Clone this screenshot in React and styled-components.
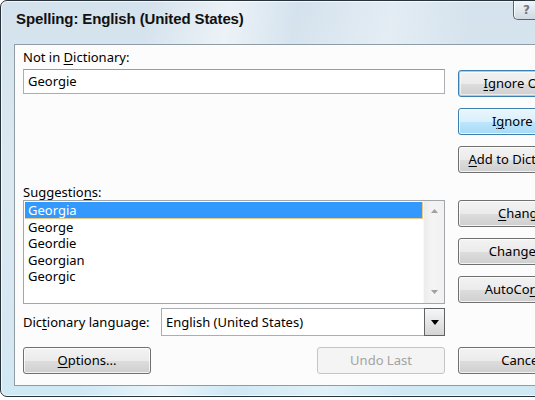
import React from 'react';
import styled, { createGlobalStyle, css } from 'styled-components';

const Global = createGlobalStyle`
  html, body { margin: 0; padding: 0; background: #ffffff; overflow: hidden; }
  body { width: 535px; height: 400px; font-family: "Noto Sans", "Segoe UI", sans-serif; font-size: 13px; color: #000; }
  * { box-sizing: border-box; }
`;

const Window = styled.div`
  width: 610px;
  height: 397px;
  border: 1px solid #27323a;
  border-radius: 7px 7px 7px 7px;
  box-shadow: inset 0 0 0 1px rgba(255, 255, 255, 0.75);
  background:
    linear-gradient(100deg, rgba(255,255,255,0) 0%, rgba(255,255,255,0) 22%, rgba(255,255,255,0.55) 34%, rgba(255,255,255,0) 44%, rgba(255,255,255,0.35) 58%, rgba(255,255,255,0) 70%),
    linear-gradient(180deg, #d4e2ed 0%, #dbe8f1 40%, #d7e7f1 85%, #cfe9f5 100%);
  display: flex;
  flex-direction: column;
  overflow: hidden;
`;

const TitleBar = styled.div`
  height: 43px;
  display: flex;
  align-items: flex-start;
  flex: none;
`;

const Title = styled.div`
  flex: 1;
  padding: 9px 0 0 15px;
  font-family: "Liberation Sans", Arial, sans-serif;
  font-weight: bold;
  font-size: 15px;
  letter-spacing: -0.12px;
  line-height: 18px;
  color: #111;
`;

const Caption = styled.div`
  display: flex;
  margin-right: 27px;
  margin-top: -1px;
`;

const HelpButton = styled.div`
  width: 26px;
  height: 20px;
  border: 1px solid #5a656e;
  border-top: none;
  border-right: none;
  border-radius: 0 0 0 5px;
  background: linear-gradient(180deg, #f3f6f9 0%, #e2e9ef 50%, #cfd9e1 100%);
  box-shadow: inset 1px 0 0 rgba(255,255,255,0.8);
  color: #6c7780;
  font-family: "DejaVu Sans", sans-serif;
  font-weight: bold;
  font-size: 12px;
  line-height: 20px;
  text-align: center;
`;

const CloseButton = styled.div`
  width: 43px;
  height: 20px;
  border: 1px solid #5a2b2b;
  border-top: none;
  border-radius: 0 0 5px 0;
  background: linear-gradient(180deg, #e7a79a 0%, #d66f5d 50%, #c0412c 100%);
  color: #fff;
  font-family: "DejaVu Sans", sans-serif;
  font-weight: bold;
  font-size: 12px;
  line-height: 20px;
  text-align: center;
`;

const Client = styled.div`
  margin: 0 13px;
  height: 342px;
  flex: none;
  border: 1px solid #8f9ba5;
  background: #fcfcfc;
  display: grid;
  grid-template-columns: 422px 127px;
  grid-template-rows: auto auto;
  column-gap: 13px;
  padding: 4px 9px 11px 8px;
`;

const LeftColumn = styled.div`
  display: flex;
  flex-direction: column;
`;

const RightColumn = styled.div`
  display: flex;
  flex-direction: column;
  padding-top: 21px;
`;

const Label = styled.div`
  height: 16px;
  line-height: 16px;
  margin-top: ${p => p.$top || 0}px;
  margin-bottom: ${p => p.$bottom || 0}px;
  white-space: nowrap;
  width: ${p => (p.$width ? `${p.$width}px` : 'auto')};
  flex: none;
`;

const Key = styled.span`
  text-decoration: underline;
  text-underline-offset: 2px;
  text-decoration-thickness: 1px;
`;

const TextBox = styled.div`
  height: 25px;
  border: 1px solid #abadb3;
  border-top-color: #9a9ca2;
  background: #fff;
  padding-left: 4px;
  line-height: 23px;
  flex: none;
`;

const ListBox = styled.div`
  height: 104px;
  border: 1px solid #a2a5aa;
  background: #fff;
  display: flex;
  flex: none;
`;

const Items = styled.div`
  flex: 1;
  padding: 1px 0 0 1px;
`;

const Item = styled.div`
  height: 16.5px;
  line-height: 16px;
  padding-left: 3px;
  ${p => p.$selected && css`
    background: #3399ff;
    color: #fff;
    box-shadow: inset -1px -1px 0 #e9c98a;
  `}
`;

const ScrollBar = styled.div`
  width: 21px;
  background: linear-gradient(90deg, #ececec 0%, #f4f4f4 40%, #f1f1f1 100%);
  border-left: 1px solid #f8f8f8;
  display: flex;
  flex-direction: column;
  justify-content: space-between;
  align-items: center;
  padding: 8px 0 9px;
`;

const DictRow = styled.div`
  margin-top: 4px;
  height: 28px;
  display: flex;
  align-items: center;
  flex: none;
`;

const Select = styled.div`
  flex: 1;
  height: 28px;
  border: 1px solid #abadb3;
  background: #fff;
  display: flex;
  align-items: stretch;
`;

const SelectText = styled.div`
  flex: 1;
  padding-left: 4px;
  line-height: 26px;
`;

const DropButton = styled.div`
  width: 21px;
  border: 1px solid #5f6366;
  background: linear-gradient(180deg, #f6f6f6 0%, #e6e6e6 50%, #d4d4d4 100%);
  display: flex;
  align-items: center;
  justify-content: center;
  margin: -1px -1px -1px 0;
`;

const Button = styled.div`
  height: 27px;
  width: ${p => (p.$width ? `${p.$width}px` : '100%')};
  margin-top: ${p => p.$top || 0}px;
  flex: none;
  border: 1px solid #707070;
  border-radius: 3px;
  background: linear-gradient(180deg, #f3f3f3 0%, #ebebeb 50%, #dddddd 51%, #cfcfcf 100%);
  box-shadow: inset 0 0 0 1px rgba(255, 255, 255, 0.75);
  text-align: center;
  line-height: 25px;
  white-space: nowrap;
  overflow: hidden;
  ${p => p.$variant === 'default' && css`
    border-color: #3c7fb1;
    box-shadow: inset 0 0 0 1px #8fd6f7, inset 0 0 0 2px rgba(255,255,255,0.6);
  `}
  ${p => p.$variant === 'hover' && css`
    border-color: #3c7fb1;
    background: linear-gradient(180deg, #eaf6fd 0%, #d9f0fc 50%, #bee6fd 51%, #a7d9f5 100%);
  `}
  ${p => p.$variant === 'disabled' && css`
    border-color: #c3c6c9;
    background: #f4f4f4;
    box-shadow: none;
    color: #a3a3a3;
  `}
`;

const BottomRow = styled.div`
  grid-column: 1 / -1;
  display: grid;
  grid-template-columns: 422px 127px;
  column-gap: 13px;
  margin-top: 11px;
`;

const BottomLeft = styled.div`
  display: flex;
  justify-content: space-between;
`;

const BottomFrame = styled.div`
  flex: 1;
`;

const Arrow = ({ dir, color = '#a0a0a0', w = 7, h = 4 }) => (
  <svg width={w} height={h} viewBox={`0 0 ${w} ${h}`}>
    {dir === 'up'
      ? <polygon points={`0,${h} ${w},${h} ${w / 2},0`} fill={color} />
      : <polygon points={`0,0 ${w},0 ${w / 2},${h}`} fill={color} />}
  </svg>
);

const suggestions = ['Georgia', 'George', 'Geordie', 'Georgian', 'Georgic'];

export default function App() {
  return (
    <>
      <Global />
      <Window>
        <TitleBar>
          <Title>Spelling: English (United States)</Title>
          <Caption>
            <HelpButton>?</HelpButton>
            <CloseButton>✕</CloseButton>
          </Caption>
        </TitleBar>
        <Client>
          <LeftColumn>
            <Label $bottom={4}>Not in <Key>D</Key>ictionary:</Label>
            <TextBox>Georgie</TextBox>
            <Label $top={90}>Suggestio<Key>n</Key>s:</Label>
            <ListBox>
              <Items>
                {suggestions.map((s, i) => (
                  <Item key={s} $selected={i === 0}>{s}</Item>
                ))}
              </Items>
              <ScrollBar>
                <Arrow dir="up" />
                <Arrow dir="down" />
              </ScrollBar>
            </ListBox>
            <DictRow>
              <Label $width={138}>Dic<Key>t</Key>ionary language:</Label>
              <Select>
                <SelectText>English (United States)</SelectText>
                <DropButton>
                  <Arrow dir="down" color="#000" w={8} h={5} />
                </DropButton>
              </Select>
            </DictRow>
          </LeftColumn>
          <RightColumn>
            <Button $variant="default"><Key>I</Key>gnore Once</Button>
            <Button $variant="hover" $top={11}>I<Key>g</Key>nore All</Button>
            <Button $top={11}><Key>A</Key>dd to Dictionary</Button>
            <Button $top={27}><Key>C</Key>hange</Button>
            <Button $top={11}>Change A<Key>l</Key>l</Button>
            <Button $top={11}>AutoCo<Key>r</Key>rect</Button>
          </RightColumn>
          <BottomRow>
            <BottomLeft>
              <Button $width={128}><Key>O</Key>ptions...</Button>
              <Button $width={128} $variant="disabled">Undo Last</Button>
            </BottomLeft>
            <Button>Cancel</Button>
          </BottomRow>
        </Client>
        <BottomFrame />
      </Window>
    </>
  );
}
